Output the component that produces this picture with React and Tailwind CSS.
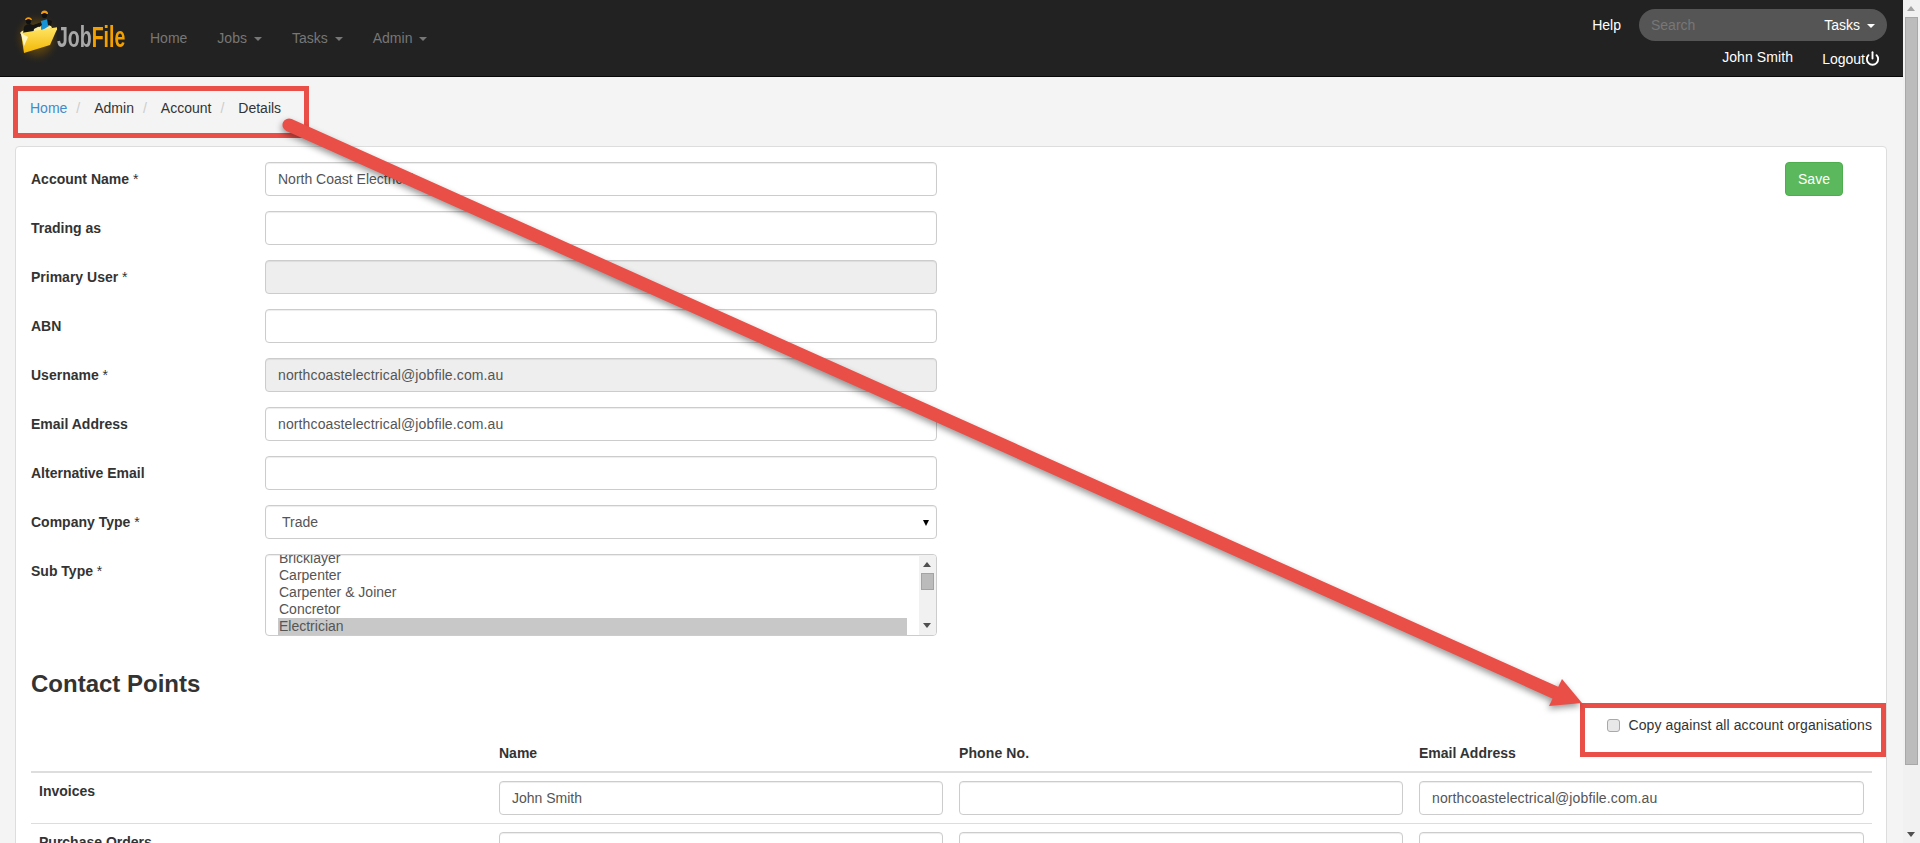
import { Power } from 'lucide-react';

const inputCls = 'block w-full h-[34px] px-3 rounded border border-[#ccc] bg-white text-sm text-[#555] shadow-[inset_0_1px_1px_rgba(0,0,0,0.075)] outline-none';
const email = 'northcoastelectrical@jobfile.com.au';

// Folder with two workers, plain shapes
function LogoMark() {
  return (
    <svg width="45" height="60" viewBox="12 8 45 60" className="shrink-0">
      <defs>
        <radialGradient id="glow" cx="50%" cy="50%" r="50%">
          <stop offset="0%" stopColor="#d99400" stopOpacity="0.8" />
          <stop offset="65%" stopColor="#6b4a05" stopOpacity="0.35" />
          <stop offset="100%" stopColor="#222" stopOpacity="0" />
        </radialGradient>
        <linearGradient id="flap" x1="0" y1="0" x2="0" y2="1">
          <stop offset="0%" stopColor="#ffe566" />
          <stop offset="100%" stopColor="#f2b705" />
        </linearGradient>
      </defs>
      <ellipse cx="37" cy="38" rx="25" ry="27" fill="url(#glow)" />
      <path d="M20 33 L22 31 L50 24 L52 28 L26 40 Z" fill="#f7e9a0" />
      <path d="M24 27c1-2 3-3 6-3l3 1 6-2 2 2-7 4-1 6-8 4-3 1z" fill="#141414" />
      <path d="M25 20a3.6 3.6 0 0 1 7 0z" fill="#f39c12" />
      <circle cx="28.5" cy="21.5" r="2.6" fill="#111" />
      <path d="M41 21l7-2 1 7-8 5z" fill="#1593d6" />
      <path d="M47 19l5 2-1 5-3-1zM41 22l-3 2 1 3 3-2z" fill="#141414" />
      <path d="M41 14a3.4 3.4 0 0 1 7 0z" fill="#f39c12" />
      <circle cx="44.5" cy="15.5" r="2.6" fill="#111" />
      <path d="M21 33 L58 27 L50 45 L24 53 Z" fill="url(#flap)" />
      <path d="M21 33 L24 46 L28 37 Z" fill="#fff6c4" />
    </svg>
  );
}

function Caret({ className }) {
  return <span className={`inline-block w-0 h-0 ml-[7px] align-middle border-x-4 border-x-transparent border-t-4 ${className}`} />;
}

function NavBar() {
  return (
    <header className="flex justify-between h-[77px] bg-[#222] border-b border-[#080808] text-sm">
      <div className="flex items-center pl-3">
        <LogoMark />
        <div className="w-[78px] h-[36px] flex items-center -mt-[2px]">
          <span className="origin-left scale-x-[0.65] text-[30px] leading-none font-bold whitespace-nowrap">
            <span className="text-[#a8a8a8]">Job</span>
            <span className="text-[#f4a100]">File</span>
          </span>
        </div>
        <nav className="flex text-[#777]">
          <a className="px-[15px]">Home</a>
          <a className="px-[15px]">Jobs<Caret className="border-t-[#777]" /></a>
          <a className="px-[15px]">Tasks<Caret className="border-t-[#777]" /></a>
          <a className="px-[15px]">Admin<Caret className="border-t-[#777]" /></a>
        </nav>
      </div>
      <div className="flex flex-col items-end pr-[16px] pt-[9px] text-white">
        <div className="flex items-center">
          <span className="mr-[18px]">Help</span>
          <div className="flex items-center w-[248px] h-[32px] pl-3 pr-3 rounded-full bg-[#555]">
            <input placeholder="Search" className="flex-1 min-w-0 bg-transparent outline-none placeholder:text-[#777]" />
            <span>Tasks<Caret className="border-t-white" /></span>
          </div>
        </div>
        <div className="flex items-start mt-[6px] pr-[7px]">
          <span className="tracking-[0.1px]">John Smith</span>
          <span className="flex items-center ml-[29px] mt-[2px]">
            Logout
            <Power size={15} strokeWidth={3} className="-mt-[2px]" />
          </span>
        </div>
      </div>
    </header>
  );
}

function Breadcrumb() {
  const sep = <span className="ml-[9px] mr-[14px] text-[#ccc]">/</span>;
  return (
    <div className="flex h-[69px] pl-[30px] pt-[21px] text-sm leading-5 text-[#333]">
      <a className="text-[#428bca]">Home</a>{sep}
      <span>Admin</span>{sep}
      <span>Account</span>{sep}
      <span>Details</span>
    </div>
  );
}

function Row({ label, star, children }) {
  return (
    <div className="flex">
      <label className="w-[234px] shrink-0 pt-[7px] text-sm leading-5 font-bold text-[#333]">
        {label}{star && <span className="font-normal"> *</span>}
      </label>
      <div className="w-[672px]">{children}</div>
    </div>
  );
}

function SubTypeList() {
  return (
    <div className="relative h-[82px] rounded border border-[#ccc] bg-white overflow-hidden shadow-[inset_0_1px_1px_rgba(0,0,0,0.075)] text-sm leading-[17px] text-[#555]">
      <ul className="-mt-[5px] ml-[12px] w-[629px]">
        <li className="pl-[1px]">Bricklayer</li>
        <li className="pl-[1px]">Carpenter</li>
        <li className="pl-[1px]">Carpenter &amp; Joiner</li>
        <li className="pl-[1px]">Concretor</li>
        <li className="pl-[1px] bg-[#c8c8c8]">Electrician</li>
      </ul>
      {/* list's own scrollbar */}
      <div className="absolute right-0 top-0 bottom-0 w-[17px] bg-[#f1f1f1]">
        <span className="absolute left-[4px] top-[7px] w-0 h-0 border-x-4 border-x-transparent border-b-[5px] border-b-[#505050]" />
        <span className="absolute left-[2px] top-[18px] w-[13px] h-[17px] bg-[#bbb] border border-[#a3a3a3]" />
        <span className="absolute left-[4px] bottom-[7px] w-0 h-0 border-x-4 border-x-transparent border-t-[5px] border-t-[#505050]" />
      </div>
    </div>
  );
}

function AccountForm() {
  return (
    <div className="flex justify-between pr-[28px]">
      <div className="flex flex-col gap-[15px]">
        <Row label="Account Name" star><input className={inputCls} defaultValue="North Coast Electrical" /></Row>
        <Row label="Trading as"><input className={inputCls} /></Row>
        <Row label="Primary User" star><input disabled className={`${inputCls} !bg-[#eee]`} /></Row>
        <Row label="ABN"><input className={inputCls} /></Row>
        <Row label="Username" star><input disabled className={`${inputCls} !bg-[#eee] tracking-[0.12px]`} defaultValue={email} /></Row>
        <Row label="Email Address"><input className={`${inputCls} tracking-[0.12px]`} defaultValue={email} /></Row>
        <Row label="Alternative Email"><input className={inputCls} /></Row>
        <Row label="Company Type" star>
          <div className="relative">
            <select className={`${inputCls} appearance-none pl-4`} defaultValue="Trade">
              <option>Trade</option>
            </select>
            <span className="absolute right-[8px] top-[15px] w-0 h-0 border-x-[3px] border-x-transparent border-t-[6px] border-t-black" />
          </div>
        </Row>
        <Row label="Sub Type" star><SubTypeList /></Row>
      </div>
      <button className="self-start w-[58px] h-[34px] rounded bg-[#5cb85c] border border-[#4cae4c] text-sm text-white">Save</button>
    </div>
  );
}

const contactRows = ['Invoices', 'Purchase Orders', 'Quotes'];

function ContactPoints() {
  return (
    <div className="w-[1841px]">
      <h3 className="mt-[35px] text-2xl leading-[26px] font-bold text-[#333]">Contact Points</h3>
      <label className="flex items-center justify-end mt-[18px] text-sm leading-5 tracking-[0.1px] text-[#333]">
        <input type="checkbox" className="appearance-none w-[13px] h-[13px] mr-[8px] rounded-[3px] border border-[#a9a9a9] bg-[#e8e8e8]" />
        Copy against all account organisations
      </label>
      <table className="w-full table-fixed border-collapse text-sm text-[#333]">
        <thead>
          <tr className="border-b-2 border-[#ddd] text-left">
            <th className="w-[460px] p-2 leading-5"></th>
            <th className="w-[460px] p-2 leading-5">Name</th>
            <th className="w-[460px] p-2 leading-5 tracking-[0.1px]">Phone No.</th>
            <th className="w-[461px] p-2 leading-5">Email Address</th>
          </tr>
        </thead>
        <tbody>
          {contactRows.map((name, i) => (
            <tr key={name} className="border-b border-[#ddd]">
              <td className="p-2 align-top font-bold leading-5">{name}</td>
              <td className="p-2"><input className={inputCls} defaultValue={i === 0 ? 'John Smith' : ''} /></td>
              <td className="p-2"><input className={inputCls} /></td>
              <td className="p-2"><input className={`${inputCls} tracking-[0.12px]`} defaultValue={i === 0 ? email : ''} /></td>
            </tr>
          ))}
        </tbody>
      </table>
    </div>
  );
}

function PageScrollbar() {
  return (
    <aside className="relative w-[17px] shrink-0 bg-[#f1f1f1]">
      <span className="absolute left-[4px] top-[6px] w-0 h-0 border-x-4 border-x-transparent border-b-[5px] border-b-[#a3a3a3]" />
      <div className="absolute left-[2px] top-[17px] w-[13px] h-[748px] bg-[#bcbcbc] border border-[#a8a8a8]" />
      <span className="absolute left-[4px] bottom-[6px] w-0 h-0 border-x-4 border-x-transparent border-t-[5px] border-t-[#505050]" />
    </aside>
  );
}

// Red annotations drawn on top of the screenshot
function Annotations() {
  return (
    <>
      <div className="absolute left-[13px] top-[86px] w-[296px] h-[52px] border-[5px] border-[#e94e47]" />
      <div className="absolute left-[1580px] top-[703px] w-[306px] h-[54px] border-[5px] border-[#e94e47]" />
      <svg width="1903" height="843" className="absolute left-0 top-0 pointer-events-none drop-shadow-[-1px_3px_3px_rgba(0,0,0,0.4)]">
        <line x1="289" y1="125" x2="1556" y2="693" stroke="#e94e47" strokeWidth="13" strokeLinecap="round" />
        <polygon points="1562,679 1549,706 1582,703" fill="#e94e47" />
      </svg>
    </>
  );
}

export default function App() {
  return (
    <div className="flex h-[843px] overflow-hidden bg-[#f4f4f4] font-['Liberation_Sans',Arial,sans-serif]">
      <main className="relative flex-1 min-w-0 overflow-hidden">
        <NavBar />
        <Breadcrumb />
        <section className="ml-[15px] mr-[16px] h-[800px] pt-[15px] px-[15px] rounded border border-[#ddd] bg-white">
          <AccountForm />
          <ContactPoints />
        </section>
        <Annotations />
      </main>
      <PageScrollbar />
    </div>
  );
}
